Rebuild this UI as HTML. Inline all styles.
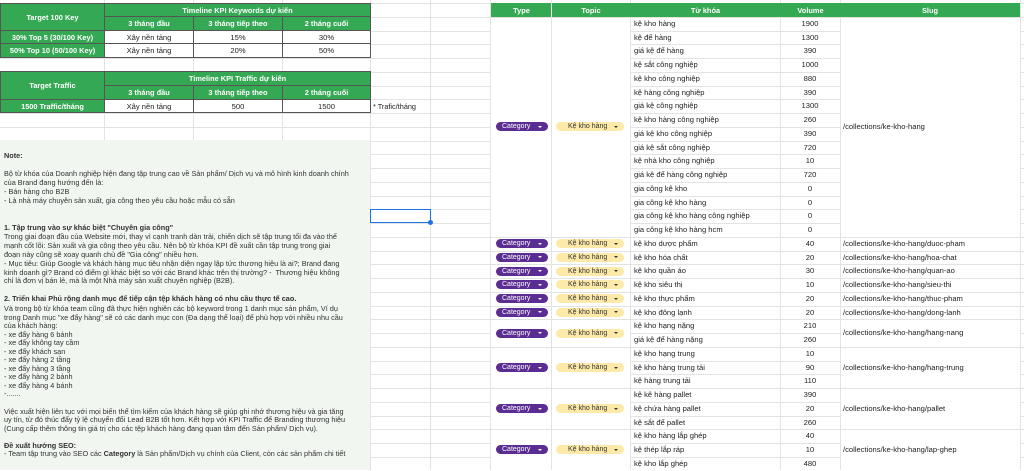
<!DOCTYPE html>
<html><head><meta charset="utf-8"><style>
*{margin:0;padding:0;box-sizing:border-box}
body{width:1024px;height:470px;overflow:hidden;background:#fff;font-family:"Liberation Sans","Noto Sans CJK SC",sans-serif;font-size:7.6px;color:#222;position:relative}
.h{position:absolute;left:0;width:1024px;height:1px;background:#e3e3e3}
.v{position:absolute;top:0;height:470px;width:1px;background:#e3e3e3}
.a{position:absolute}
.g{background:#34a853;color:#fff;font-weight:bold;display:flex;align-items:center;justify-content:center;border:1px solid #555;font-size:7.4px}
.c{background:#fff;display:flex;align-items:center;justify-content:center;border:1px solid #555}
.note{position:absolute;left:0;top:140px;width:370px;height:330px;background:#f1f6f1}
.tx{position:absolute;left:4px;white-space:nowrap;font-size:7.3px;color:#333}
.w{position:absolute;background:#fff}
.k{position:absolute;height:13.75px;line-height:13.75px;white-space:nowrap}
.cat{position:absolute;background:#5b2c91;color:#fff;border-radius:5px;height:9px;width:52px;font-size:7px;display:flex;align-items:center;padding-left:6px}
.cat:after{content:"";position:absolute;right:6px;top:3.5px;border:2.2px solid transparent;border-top:2.5px solid #fff}
.top{position:absolute;background:#fde9a8;color:#333;border-radius:5px;height:9px;width:68px;font-size:7px;display:flex;align-items:center;padding-left:12px}
.top:after{content:"";position:absolute;right:6px;top:3.5px;border:2.2px solid transparent;border-top:2.5px solid #333}
</style></head><body>
<div class="h" style="top:3px"></div><div class="h" style="top:16.75px"></div><div class="h" style="top:30.5px"></div><div class="h" style="top:44.25px"></div><div class="h" style="top:58px"></div><div class="h" style="top:71.75px"></div><div class="h" style="top:85.5px"></div><div class="h" style="top:99.25px"></div><div class="h" style="top:113px"></div><div class="h" style="top:126.75px"></div><div class="h" style="top:140.5px"></div><div class="h" style="top:154.25px"></div><div class="h" style="top:168px"></div><div class="h" style="top:181.75px"></div><div class="h" style="top:195.5px"></div><div class="h" style="top:209.25px"></div><div class="h" style="top:223px"></div><div class="h" style="top:236.75px"></div><div class="h" style="top:250.5px"></div><div class="h" style="top:264.25px"></div><div class="h" style="top:278px"></div><div class="h" style="top:291.75px"></div><div class="h" style="top:305.5px"></div><div class="h" style="top:319.25px"></div><div class="h" style="top:333px"></div><div class="h" style="top:346.75px"></div><div class="h" style="top:360.5px"></div><div class="h" style="top:374.25px"></div><div class="h" style="top:388px"></div><div class="h" style="top:401.75px"></div><div class="h" style="top:415.5px"></div><div class="h" style="top:429.25px"></div><div class="h" style="top:443px"></div><div class="h" style="top:456.75px"></div>
<div class="v" style="left:104px"></div><div class="v" style="left:193px"></div><div class="v" style="left:282px"></div><div class="v" style="left:370px"></div><div class="v" style="left:430px"></div><div class="v" style="left:490px"></div><div class="v" style="left:630px"></div><div class="v" style="left:780px"></div><div class="v" style="left:840px"></div><div class="v" style="left:1020px"></div>

<div class="a g" style="left:0;top:3px;width:105px;height:28px">Target 100 Key</div>
<div class="a g" style="left:104px;top:3px;width:267px;height:14px">Timeline KPI Keywords dự kiến</div>
<div class="a g" style="left:104px;top:16px;width:90px;height:15px">3 tháng đầu</div>
<div class="a g" style="left:193px;top:16px;width:90px;height:15px">3 tháng tiếp theo</div>
<div class="a g" style="left:282px;top:16px;width:89px;height:15px">2 tháng cuối</div>
<div class="a g" style="left:0;top:30px;width:105px;height:14px">30% Top 5 (30/100 Key)</div>
<div class="a c" style="left:104px;top:30px;width:90px;height:14px">Xây nền tảng</div>
<div class="a c" style="left:193px;top:30px;width:90px;height:14px">15%</div>
<div class="a c" style="left:282px;top:30px;width:89px;height:14px">30%</div>
<div class="a g" style="left:0;top:43px;width:105px;height:15px">50% Top 10 (50/100 Key)</div>
<div class="a c" style="left:104px;top:43px;width:90px;height:15px">Xây nền tảng</div>
<div class="a c" style="left:193px;top:43px;width:90px;height:15px">20%</div>
<div class="a c" style="left:282px;top:43px;width:89px;height:15px">50%</div>
<div class="a g" style="left:0;top:71px;width:105px;height:29px">Target Traffic</div>
<div class="a g" style="left:104px;top:71px;width:267px;height:15px">Timeline KPI Traffic dự kiến</div>
<div class="a g" style="left:104px;top:85px;width:90px;height:15px">3 tháng đầu</div>
<div class="a g" style="left:193px;top:85px;width:90px;height:15px">3 tháng tiếp theo</div>
<div class="a g" style="left:282px;top:85px;width:89px;height:15px">2 tháng cuối</div>
<div class="a g" style="left:0;top:99px;width:105px;height:14px">1500 Traffic/tháng</div>
<div class="a c" style="left:104px;top:99px;width:90px;height:14px">Xây nền tảng</div>
<div class="a c" style="left:193px;top:99px;width:90px;height:14px">500</div>
<div class="a c" style="left:282px;top:99px;width:89px;height:14px">1500</div>
<div class="a" style="left:373px;top:102px;font-size:7.3px">* Trafic/tháng</div>

<div class="note">
<div class="tx" style="top:10.5px;line-height:9px"><b>Note:</b><br><br>Bộ từ khóa của Doanh nghiệp hiện đang tập trung cao về Sản phẩm/ Dịch vụ và mô hình kinh doanh chính<br>của Brand đang hướng đến là:<br>- Bán hàng cho B2B<br>- Là nhà máy chuyên sản xuất, gia công theo yêu cầu hoặc mẫu có sẵn</div>
<div class="tx" style="top:84px;line-height:8.9px"><b>1. Tập trung vào sự khác biệt "Chuyên gia công"</b><br>Trong giai đoạn đầu của Website mới, thay vì cạnh tranh dàn trải, chiến dịch sẽ tập trung tối đa vào thế<br>mạnh cốt lõi: Sản xuất và gia công theo yêu cầu. Nên bộ từ khóa KPI đề xuất cần tập trung trong giai<br>đoạn này cũng sẽ xoay quanh chủ đề "Gia công" nhiều hơn.<br>- Mục tiêu: Giúp Google và khách hàng mục tiêu nhận diện ngay lập tức thương hiệu là ai?; Brand đang<br>kinh doanh gì? Brand có điểm gì khác biệt so với các Brand khác trên thị trường? -&nbsp; Thương hiệu không<br>chỉ là đơn vị bán lẻ, mà là một Nhà máy sản xuất chuyên nghiệp (B2B).<br><br><b>2. Triển khai Phủ rộng danh mục để tiếp cận tệp khách hàng có nhu cầu thực tế cao.</b></div>
<div class="tx" style="top:165px;line-height:8.55px">Và trong bộ từ khóa team cũng đã thực hiện nghiên các bộ keyword trong 1 danh mục sản phẩm, Ví dụ<br>trong Danh mục "xe đẩy hàng" sẽ có các danh mục con (Đa dạng thể loại) để phù hợp với nhiều nhu cầu<br>của khách hàng:<br>- xe đẩy hàng 6 bánh<br>- xe đẩy không tay cầm<br>- xe đẩy khách sạn<br>- xe đẩy hàng 2 tầng<br>- xe đẩy hàng 3 tầng<br>- xe đẩy hàng 2 bánh<br>- xe đẩy hàng 4 bánh<br>-.......<br><br>Việc xuất hiện liên tục với mọi biến thể tìm kiếm của khách hàng sẽ giúp ghi nhớ thương hiệu và gia tăng<br>uy tín, từ đó thúc đẩy tỷ lệ chuyển đổi Lead B2B tốt hơn. Kết hợp với KPI Traffic để Branding thương hiệu<br>(Cung cấp thêm thông tin giá trị cho các tệp khách hàng đang quan tâm đến Sản phẩm/ Dịch vụ).<br><br><b>Đề xuất hướng SEO:</b><br>- Team tập trung vào SEO các <b>Category</b> là Sản phẩm/Dịch vụ chính của Client, còn các sản phẩm chi tiết</div>
</div>
<div class="a" style="left:370px;top:209px;width:61px;height:14px;border:1.5px solid #1a73e8"></div>
<div class="a" style="left:428px;top:220px;width:5px;height:5px;border-radius:50%;background:#1a73e8"></div>

<div class="a g" style="left:491px;top:3px;width:61px;height:14px;border:none">Type</div>
<div class="a g" style="left:551px;top:3px;width:80px;height:14px;border:none">Topic</div>
<div class="a g" style="left:630px;top:3px;width:151px;height:14px;border:none">Từ khóa</div>
<div class="a g" style="left:780px;top:3px;width:61px;height:14px;border:none">Volume</div>
<div class="a g" style="left:840px;top:3px;width:180px;height:14px;border:none">Slug</div>

<div class="w" style="left:491px;top:17.75px;width:139px;height:219px"></div>
<div class="w" style="left:841px;top:17.75px;width:179px;height:219px"></div>
<div class="w" style="left:491px;top:320.25px;width:139px;height:26.5px"></div>
<div class="w" style="left:841px;top:320.25px;width:179px;height:26.5px"></div>
<div class="w" style="left:491px;top:347.75px;width:139px;height:40.25px"></div>
<div class="w" style="left:841px;top:347.75px;width:179px;height:40.25px"></div>
<div class="w" style="left:491px;top:389px;width:139px;height:40.25px"></div>
<div class="w" style="left:841px;top:389px;width:179px;height:40.25px"></div>
<div class="w" style="left:491px;top:430.25px;width:139px;height:40px"></div>
<div class="w" style="left:841px;top:430.25px;width:179px;height:40px"></div>
<div class="v" style="left:551px"></div><div class="v" style="left:490px"></div>

<div class="k" style="left:634px;top:16.75px">kệ kho hàng</div><div class="k" style="left:634px;top:30.5px">kệ để hàng</div><div class="k" style="left:634px;top:44.25px">giá kệ để hàng</div><div class="k" style="left:634px;top:58px">kệ sắt công nghiệp</div><div class="k" style="left:634px;top:71.75px">kệ kho công nghiệp</div><div class="k" style="left:634px;top:85.5px">kệ hàng công nghiệp</div><div class="k" style="left:634px;top:99.25px">giá kệ công nghiệp</div><div class="k" style="left:634px;top:113px">kệ kho hàng công nghiệp</div><div class="k" style="left:634px;top:126.75px">giá kệ kho công nghiệp</div><div class="k" style="left:634px;top:140.5px">giá kệ sắt công nghiệp</div><div class="k" style="left:634px;top:154.25px">kệ nhà kho công nghiệp</div><div class="k" style="left:634px;top:168px">giá kệ để hàng công nghiệp</div><div class="k" style="left:634px;top:181.75px">gia công kệ kho</div><div class="k" style="left:634px;top:195.5px">gia công kệ kho hàng</div><div class="k" style="left:634px;top:209.25px">gia công kệ kho hàng công nghiệp</div><div class="k" style="left:634px;top:223px">gia công kệ kho hàng hcm</div><div class="k" style="left:634px;top:236.75px">kệ kho dược phẩm</div><div class="k" style="left:634px;top:250.5px">kệ kho hóa chất</div><div class="k" style="left:634px;top:264.25px">kệ kho quần áo</div><div class="k" style="left:634px;top:278px">kệ kho siêu thị</div><div class="k" style="left:634px;top:291.75px">kệ kho thực phẩm</div><div class="k" style="left:634px;top:305.5px">kệ kho đông lạnh</div><div class="k" style="left:634px;top:319.25px">kệ kho hạng nặng</div><div class="k" style="left:634px;top:333px">giá kệ để hàng nặng</div><div class="k" style="left:634px;top:346.75px">kệ kho hạng trung</div><div class="k" style="left:634px;top:360.5px">kệ kho hàng trung tải</div><div class="k" style="left:634px;top:374.25px">kệ hàng trung tải</div><div class="k" style="left:634px;top:388px">kệ kê hàng pallet</div><div class="k" style="left:634px;top:401.75px">kệ chứa hàng pallet</div><div class="k" style="left:634px;top:415.5px">kệ sắt để pallet</div><div class="k" style="left:634px;top:429.25px">kệ kho hàng lắp ghép</div><div class="k" style="left:634px;top:443px">kệ thép lắp ráp</div><div class="k" style="left:634px;top:456.75px">kệ kho lắp ghép</div>

<div style="position:absolute;left:780px;width:60px;text-align:center;top:0">
<div class="k" style="width:60px;top:16.75px">1900</div><div class="k" style="width:60px;top:30.5px">1300</div><div class="k" style="width:60px;top:44.25px">390</div><div class="k" style="width:60px;top:58px">1000</div><div class="k" style="width:60px;top:71.75px">880</div><div class="k" style="width:60px;top:85.5px">390</div><div class="k" style="width:60px;top:99.25px">1300</div><div class="k" style="width:60px;top:113px">260</div><div class="k" style="width:60px;top:126.75px">390</div><div class="k" style="width:60px;top:140.5px">720</div><div class="k" style="width:60px;top:154.25px">10</div><div class="k" style="width:60px;top:168px">720</div><div class="k" style="width:60px;top:181.75px">0</div><div class="k" style="width:60px;top:195.5px">0</div><div class="k" style="width:60px;top:209.25px">0</div><div class="k" style="width:60px;top:223px">0</div><div class="k" style="width:60px;top:236.75px">40</div><div class="k" style="width:60px;top:250.5px">20</div><div class="k" style="width:60px;top:264.25px">30</div><div class="k" style="width:60px;top:278px">10</div><div class="k" style="width:60px;top:291.75px">20</div><div class="k" style="width:60px;top:305.5px">20</div><div class="k" style="width:60px;top:319.25px">210</div><div class="k" style="width:60px;top:333px">260</div><div class="k" style="width:60px;top:346.75px">10</div><div class="k" style="width:60px;top:360.5px">90</div><div class="k" style="width:60px;top:374.25px">110</div><div class="k" style="width:60px;top:388px">390</div><div class="k" style="width:60px;top:401.75px">20</div><div class="k" style="width:60px;top:415.5px">260</div><div class="k" style="width:60px;top:429.25px">40</div><div class="k" style="width:60px;top:443px">10</div><div class="k" style="width:60px;top:456.75px">480</div>
</div>

<div class="cat" style="left:496px;top:122px">Category</div><div class="top" style="left:556px;top:122px">Kệ kho hàng</div>
<div class="k" style="left:843px;top:119.9px">/collections/ke-kho-hang</div>

<div class="cat" style="left:496px;top:239px">Category</div><div class="top" style="left:556px;top:239px">Kệ kho hàng</div><div class="k" style="left:843px;top:236.75px">/collections/ke-kho-hang/duoc-pham</div>
<div class="cat" style="left:496px;top:252.5px">Category</div><div class="top" style="left:556px;top:252.5px">Kệ kho hàng</div><div class="k" style="left:843px;top:250.5px">/collections/ke-kho-hang/hoa-chat</div>
<div class="cat" style="left:496px;top:266.5px">Category</div><div class="top" style="left:556px;top:266.5px">Kệ kho hàng</div><div class="k" style="left:843px;top:264.25px">/collections/ke-kho-hang/quan-ao</div>
<div class="cat" style="left:496px;top:280px">Category</div><div class="top" style="left:556px;top:280px">Kệ kho hàng</div><div class="k" style="left:843px;top:278px">/collections/ke-kho-hang/sieu-thi</div>
<div class="cat" style="left:496px;top:294px">Category</div><div class="top" style="left:556px;top:294px">Kệ kho hàng</div><div class="k" style="left:843px;top:291.75px">/collections/ke-kho-hang/thuc-pham</div>
<div class="cat" style="left:496px;top:307.5px">Category</div><div class="top" style="left:556px;top:307.5px">Kệ kho hàng</div><div class="k" style="left:843px;top:305.5px">/collections/ke-kho-hang/dong-lanh</div>
<div class="cat" style="left:496px;top:328.5px">Category</div><div class="top" style="left:556px;top:328.5px">Kệ kho hàng</div><div class="k" style="left:843px;top:326px">/collections/ke-kho-hang/hang-nang</div>
<div class="cat" style="left:496px;top:363px">Category</div><div class="top" style="left:556px;top:363px">Kệ kho hàng</div><div class="k" style="left:843px;top:360.5px">/collections/ke-kho-hang/hang-trung</div>
<div class="cat" style="left:496px;top:404px">Category</div><div class="top" style="left:556px;top:404px">Kệ kho hàng</div><div class="k" style="left:843px;top:401.75px">/collections/ke-kho-hang/pallet</div>
<div class="cat" style="left:496px;top:445px">Category</div><div class="top" style="left:556px;top:445px">Kệ kho hàng</div><div class="k" style="left:843px;top:443px">/collections/ke-kho-hang/lap-ghep</div>
</body></html>
